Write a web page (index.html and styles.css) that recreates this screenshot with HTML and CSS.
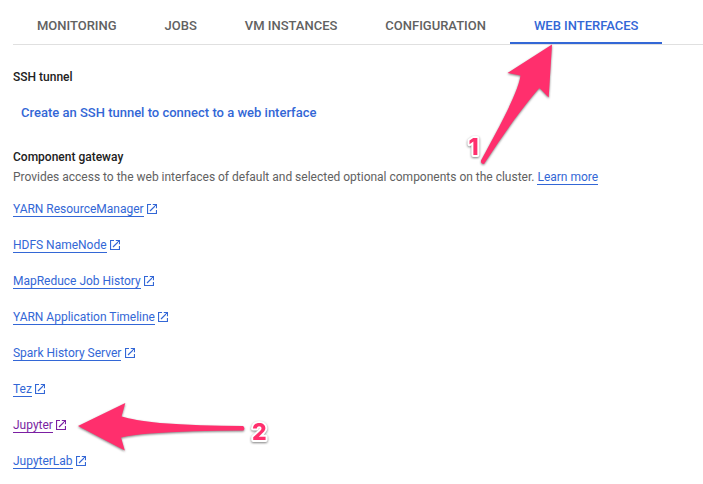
FILE: index.html
```html
<!DOCTYPE html>
<html lang="en">
<head>
<meta charset="utf-8">
<title>Web interfaces</title>
<link rel="stylesheet" href="styles.css">
</head>
<body>
<svg class="defs" width="0" height="0" aria-hidden="true">
  <symbol id="ext" viewBox="0 0 10 10">
    <path d="M4 .5H.5V9.500H9.500V6M5.800 .5H9.500V4.200M9.200 .8L3 7" fill="none" stroke="currentColor" stroke-width="1.200"/>
  </symbol>
</svg>
<nav class="tabs">
  <a class="tab">MONITORING</a>
  <a class="tab">JOBS</a>
  <a class="tab">VM INSTANCES</a>
  <a class="tab">CONFIGURATION</a>
  <a class="tab active">WEB INTERFACES</a>
</nav>
<main class="content">
  <h2 class="heading">SSH tunnel</h2>
  <a class="action">Create an SSH tunnel to connect to a web interface</a>
  <h2 class="heading gateway">Component gateway</h2>
  <p class="description">Provides access to the web interfaces of default and selected optional components on the cluster. <a class="link">Learn more</a></p>
  <ul class="links">
    <li class="item"><a class="link">YARN ResourceManager</a><svg class="icon"><use href="#ext"/></svg></li>
    <li class="item"><a class="link">HDFS NameNode</a><svg class="icon"><use href="#ext"/></svg></li>
    <li class="item"><a class="link">MapReduce Job History</a><svg class="icon"><use href="#ext"/></svg></li>
    <li class="item"><a class="link">YARN Application Timeline</a><svg class="icon"><use href="#ext"/></svg></li>
    <li class="item"><a class="link">Spark History Server</a><svg class="icon"><use href="#ext"/></svg></li>
    <li class="item"><a class="link">Tez</a><svg class="icon"><use href="#ext"/></svg></li>
    <li class="item visited"><a class="link">Jupyter</a><svg class="icon"><use href="#ext"/></svg></li>
    <li class="item"><a class="link">JupyterLab</a><svg class="icon"><use href="#ext"/></svg></li>
  </ul>
</main>
<svg class="annotations" width="703" height="484" viewBox="0 0 703 484">
  <g class="arrow">
    <path d="M552 44.5L507.5 73L520.5 75.5C518 93 499 127 481 160.500Q480.500 164 484 164Q499 141 514 120Q532 96 539.500 88L548.700 97.500Z"/>
    <path d="M78 426L125.300 403L121.500 416.500Q133 420 160 423Q200 426 243 426Q245.500 428 243.500 430.500Q190 430.500 150 433.500Q132 435 121 437.500L124.800 450.500Z"/>
  </g>
  <g class="number">
    <text x="468.500" y="155">1</text>
    <text x="252" y="440">2</text>
  </g>
</svg>
</body>
</html>
```

FILE: styles.css
```css
body {
  margin: 0;
  height: 484px;
  overflow: hidden;
  background: #fff;
  font: 12px/20px Roboto, sans-serif;
  color: #616161;
}
.defs { position: absolute; }
.tabs {
  display: flex;
  box-sizing: border-box;
  height: 45px;
  margin-left: 13px;
  border-bottom: 1px solid #e0e0e0;
}
.tab {
  box-sizing: border-box;
  height: 44px;
  padding: 0 24px;
  font-size: 13px;
  font-weight: 500;
  line-height: 52px;
  letter-spacing: -.01px;
  white-space: nowrap;
}
.active { color: #3367d6; border-bottom: 2px solid #3367d6; }
.content { padding: 22px 0 0 13px; }
.heading {
  margin: 0;
  font-size: 12px;
  font-weight: 500;
  color: #212121;
}
.action {
  display: block;
  margin: 16px 0 24px 8px;
  font-size: 13px;
  font-weight: 500;
  color: #3367d6;
}
.description { margin: 0 0 12px; letter-spacing: -.005px; white-space: nowrap; }
.link {
  display: inline-block;
  line-height: 14px;
  color: #3367d6;
  border-bottom: 1px solid currentColor;
}
.links { margin: 0; padding: 0; list-style: none; letter-spacing: -.01px; }
.item {
  display: flex;
  align-items: center;
  height: 20px;
  margin-bottom: 16px;
  color: #3367d6;
}
.item .link { color: inherit; }
.visited { color: #7b1fa2; }
.icon { width: 10px; height: 10px; margin-left: 3.3px; }
.annotations { position: absolute; top: 0; left: 0; pointer-events: none; }
.arrow { fill: #ff2f6d; filter: drop-shadow(0 1px 1px rgba(0, 0, 0, .5)); }
.number {
  font: 800 23px Inter, sans-serif;
  fill: #ff2f6d;
  stroke: #fff;
  stroke-width: 4px;
  stroke-linejoin: round;
  paint-order: stroke;
  filter: drop-shadow(0 1px 1px rgba(0, 0, 0, .5));
}
```
